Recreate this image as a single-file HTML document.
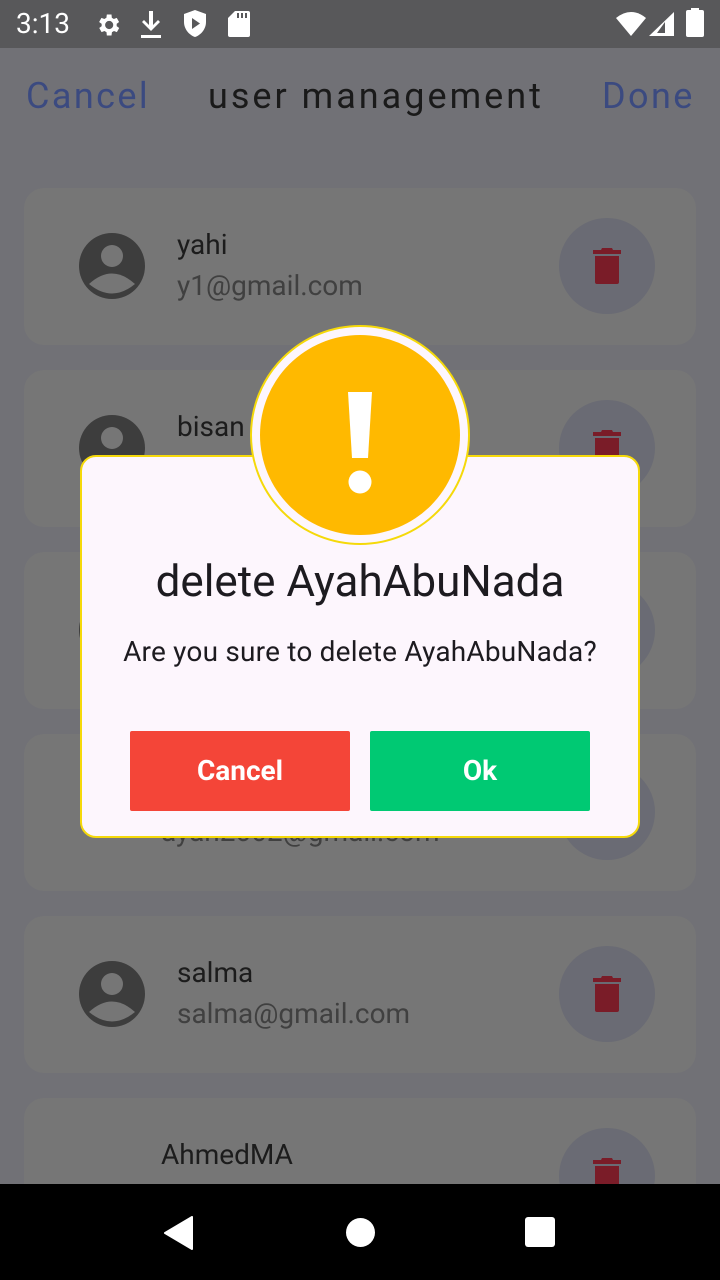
<!DOCTYPE html>
<html><head><meta charset="utf-8"><style>
*{margin:0;padding:0;box-sizing:border-box}
body{width:720px;height:1280px;overflow:hidden;background:#717176;font-family:"Roboto","Liberation Sans",sans-serif;position:relative}
.abs{position:absolute}
.sb{left:0;top:0;width:720px;height:48px;background:#58585a;color:#fff}
.hdr{top:74px;font-size:36px;letter-spacing:2.4px;line-height:44px}
.card{left:24px;width:672px;height:157px;background:#767676;border-radius:20px}
.del{left:559px;width:96px;height:96px;border-radius:50%;background:#6a6b74}
.name{font-size:28px;color:#1c1c1c;line-height:32px}
.mail{font-size:28px;color:#404040;line-height:32px}
.nav{left:0;top:1184px;width:720px;height:96px;background:#000}
</style></head><body>
<div class="abs sb">
 <div class="abs" style="left:16px;top:8px;font-size:28px;line-height:32px">3:13</div>
 <svg class="abs" style="left:94px;top:11px" width="28" height="28" viewBox="0 0 24 24"><path fill="#fff" d="M19.4 13a7.5 7.5 0 0 0 0-2l2.1-1.6-2-3.5-2.5 1a7 7 0 0 0-1.7-1L15 3h-4l-.4 2.9a7 7 0 0 0-1.7 1l-2.5-1-2 3.5L6.6 11a7.5 7.5 0 0 0 0 2l-2.1 1.6 2 3.5 2.5-1a7 7 0 0 0 1.7 1L11 21h4l.4-2.9a7 7 0 0 0 1.7-1l2.5 1 2-3.5zM13 15.5a3.5 3.5 0 1 1 0-7 3.5 3.5 0 0 1 0 7z"/></svg>
 <svg class="abs" style="left:140px;top:11px" width="22" height="28" viewBox="0 0 22 28"><path fill="#fff" d="M9 0h4v14l5-5 2 2-9 9-9-9 2-2 5 5zM1 24h20v3H1z"/></svg>
 <svg class="abs" style="left:183px;top:10px" width="24" height="28" viewBox="0 0 24 28"><path fill="#fff" d="M12 0 1 4v8c0 7 5 13 11 15 6-2 11-8 11-15V4z"/><path fill="#58585a" d="M9 8v11l8-5.5z"/></svg>
 <svg class="abs" style="left:228px;top:11px" width="22" height="26" viewBox="0 0 22 26"><path fill="#fff" d="M7 0h13a2 2 0 0 1 2 2v22a2 2 0 0 1-2 2H2a2 2 0 0 1-2-2V7z"/><path fill="#58585a" d="M9 2h2v5H9zM13 2h2v5h-2zM17 2h2v5h-2z"/></svg>
 <svg class="abs" style="left:616px;top:12px" width="30" height="24" viewBox="0 0 30 24"><path fill="#fff" d="M0 6Q15-6 30 6L15 24z"/></svg>
 <svg class="abs" style="left:648px;top:12px" width="26" height="26" viewBox="0 0 26 26"><path fill="#fff" d="M26 0v24H1z"/><path fill="#58585a" d="M17 10v11h-8z"/></svg>
 <div class="abs" style="left:686px;top:10px;width:18px;height:27px;background:#fff;border-radius:2px"></div>
 <div class="abs" style="left:691px;top:8px;width:8px;height:3px;background:#fff"></div>
</div>
<div class="abs hdr" style="left:26px;color:#3b4a80">Cancel</div>
<div class="abs hdr" style="left:208px;color:#1a1a1a;letter-spacing:3px">user management</div>
<div class="abs hdr" style="left:602px;color:#3b4a80">Done</div>

<div class="abs card" style="top:188px"></div>
<div class="abs card" style="top:370px"></div>
<div class="abs card" style="top:552px"></div>
<div class="abs card" style="top:734px"></div>
<div class="abs card" style="top:916px"></div>
<div class="abs card" style="top:1098px"></div>

<svg width="0" height="0" style="position:absolute"><defs>
<symbol id="avi" viewBox="0 0 66 66"><circle cx="33" cy="33" r="33" fill="#3d3d3d"/><circle cx="33" cy="23" r="11" fill="#767676"/><path d="M10 51Q33 30 56 51Q33 70 10 51z" fill="#767676"/></symbol>
<symbol id="tr" viewBox="0 0 28 36"><path fill="#7a1c28" d="M9 0h10l1 2h8v4H0V2h8zM2 8h24v26a2 2 0 0 1-2 2H4a2 2 0 0 1-2-2z"/></symbol>
</defs></svg>

<svg class="abs" style="left:79px;top:233px" width="66" height="66"><use href="#avi"/></svg>
<svg class="abs" style="left:79px;top:415px" width="66" height="66"><use href="#avi"/></svg>
<svg class="abs" style="left:79px;top:597px" width="66" height="66"><use href="#avi"/></svg>
<svg class="abs" style="left:79px;top:961px" width="66" height="66"><use href="#avi"/></svg>

<div class="abs name" style="left:177px;top:229px">yahi</div>
<div class="abs mail" style="left:177px;top:270px">y1@gmail.com</div>
<div class="abs name" style="left:177px;top:411px">bisan</div>
<div class="abs mail" style="left:161px;top:816px">ayah2002@gmail.com</div>
<div class="abs name" style="left:177px;top:957px">salma</div>
<div class="abs mail" style="left:177px;top:998px">salma@gmail.com</div>
<div class="abs name" style="left:161px;top:1139px">AhmedMA</div>

<div class="abs del" style="top:218px"></div>
<div class="abs del" style="top:400px"></div>
<div class="abs del" style="top:582px"></div>
<div class="abs del" style="top:764px"></div>
<div class="abs del" style="top:946px"></div>
<div class="abs del" style="top:1128px"></div>
<svg class="abs" style="left:593px;top:248px" width="28" height="36"><use href="#tr"/></svg>
<svg class="abs" style="left:593px;top:430px" width="28" height="36"><use href="#tr"/></svg>
<svg class="abs" style="left:593px;top:976px" width="28" height="36"><use href="#tr"/></svg>
<svg class="abs" style="left:593px;top:1158px" width="28" height="36"><use href="#tr"/></svg>

<div class="abs" style="left:80px;top:455px;width:560px;height:383px;background:#fdf6fd;border:2px solid #f5d90a;border-radius:16px"></div>
<div class="abs" style="left:250px;top:325px;width:220px;height:220px;border-radius:50%;background:#fdf6fd;border:2px solid #f5d90a"></div>
<div class="abs" style="left:260px;top:335px;width:200px;height:200px;border-radius:50%;background:#ffb900"></div>
<svg class="abs" style="left:340px;top:388px" width="40" height="110" viewBox="0 0 40 110"><path fill="#fff" d="M8 4h24l-4 66h-16z"/><circle cx="20" cy="94" r="11.5" fill="#fff"/></svg>
<div class="abs" style="left:60px;top:555px;width:600px;text-align:center;font-size:44px;color:#1d1b20;line-height:52px">delete AyahAbuNada</div>
<div class="abs" style="left:60px;top:635px;width:600px;text-align:center;font-size:28px;color:#1d1b20;line-height:34px;letter-spacing:0.2px">Are you sure to delete AyahAbuNada?</div>
<div class="abs" style="left:130px;top:731px;width:220px;height:80px;background:#f44538;border-radius:2px;color:#fff;font-weight:bold;font-size:28px;line-height:80px;text-align:center">Cancel</div>
<div class="abs" style="left:370px;top:731px;width:220px;height:80px;background:#00c973;border-radius:2px;color:#fff;font-weight:bold;font-size:28px;line-height:80px;text-align:center">Ok</div>

<div class="abs nav">
 <svg class="abs" style="left:164px;top:32px" width="30" height="34" viewBox="0 0 30 34"><path fill="#fff" d="M28 1v32L1 17z" stroke="#fff" stroke-linejoin="round" stroke-width="2"/></svg>
 <div class="abs" style="left:346px;top:34px;width:29px;height:29px;border-radius:50%;background:#fff"></div>
 <div class="abs" style="left:525px;top:33px;width:30px;height:30px;border-radius:3px;background:#fff"></div>
</div>
</body></html>
